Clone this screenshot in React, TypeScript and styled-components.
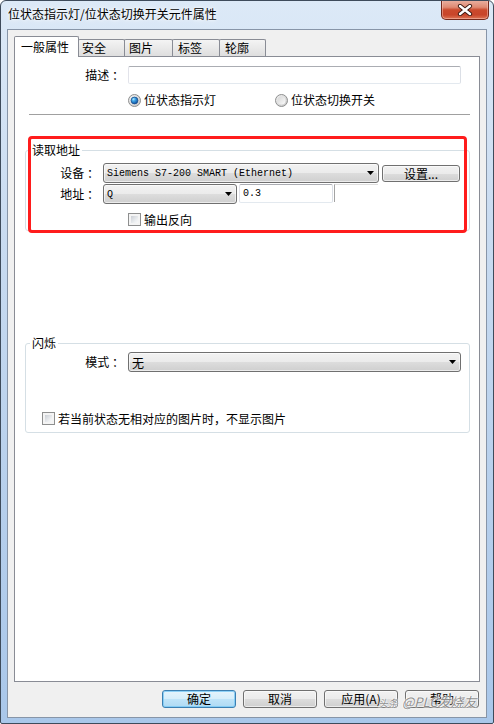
import React from "react";
import styled, { createGlobalStyle } from "styled-components";

const GlobalStyle = createGlobalStyle`
  html, body { margin: 0; padding: 0; background: #ffffff; }
  body {
    font-family: "Noto Sans CJK SC", "Noto Sans", sans-serif;
    font-size: 12px;
    color: #000;
  }
  * { box-sizing: border-box; }
`;

const Window = styled.div`
  position: relative;
  width: 494px;
  height: 724px;
  display: flex;
  flex-direction: column;
  border: 1px solid #3e4b5b;
  border-radius: 6px 6px 2px 2px;
  background: linear-gradient(180deg, #dce9f7 0%, #cadcf1 30%, #b6cfec 70%, #a9c7ea 100%);
  padding: 0 6px 5px 6px;
  overflow: hidden;
`;

const TitleBar = styled.div`
  height: 29px;
  margin: -1px -2px 0 0;
  display: flex;
  justify-content: space-between;
  align-items: flex-start;
  flex-shrink: 0;
`;

const TitleText = styled.div`
  padding: 7px 0 0 1px;
  line-height: 14px;
  font-size: 12px;
  color: #000;
  text-shadow: 0 0 6px #ffffff, 0 0 3px #ffffff;
`;

const CloseButton = styled.div`
  width: 48px;
  height: 20px;
  border: 1px solid #74291c;
  border-top: none;
  border-radius: 0 0 5px 5px;
  background: linear-gradient(180deg, #eab2a3 0%, #df8a73 38%, #cb4a2d 52%, #c8452a 78%, #de7556 100%);
  box-shadow: inset 0 0 0 1px rgba(255, 210, 200, 0.45);
  display: flex;
  align-items: center;
  justify-content: center;
`;

const Client = styled.div`
  flex: 1;
  display: flex;
  flex-direction: column;
  background: #f0f0f0;
  border: 1px solid #8795a8;
  padding-top: 6px;
`;

const TabRow = styled.div`
  position: relative;
  z-index: 2;
  height: 20px;
  margin: 0 6px;
  display: flex;
  align-items: flex-end;
`;

const Tab = styled.div<{ $active?: boolean; $w: number; $pl: number }>`
  width: ${(p) => p.$w}px;
  height: ${(p) => (p.$active ? 21 : 17)}px;
  margin-bottom: ${(p) => (p.$active ? -1 : 0)}px;
  margin-left: -1px;
  &:first-child { margin-left: 0; }
  border: 1px solid #898c95;
  border-bottom: none;
  border-radius: 2px 2px 0 0;
  background: ${(p) => (p.$active ? "#ffffff" : "linear-gradient(180deg, #f4f4f4 0%, #e9e9e9 50%, #dedede 100%)")};
  padding-left: ${(p) => p.$pl}px;
  line-height: ${(p) => (p.$active ? 19 : 15)}px;
  font-size: 12px;
  white-space: nowrap;
`;

const Panel = styled.div`
  position: relative;
  height: 626px;
  margin: 0 6px;
  border: 1px solid #898c95;
  background: #ffffff;
  display: flex;
  flex-direction: column;
  flex-shrink: 0;
`;

const Row = styled.div<{ $mt: number; $h: number; $pl?: number }>`
  margin-top: ${(p) => p.$mt}px;
  height: ${(p) => p.$h}px;
  padding-left: ${(p) => p.$pl ?? 0}px;
  display: flex;
  align-items: center;
  flex-shrink: 0;
`;

const Label = styled.div<{ $w: number }>`
  width: ${(p) => p.$w}px;
  flex-shrink: 0;
  text-align: right;
  padding-right: 4px;
  white-space: pre;
  line-height: 14px;
`;

const TextBox = styled.div<{ $w: number; $h: number }>`
  width: ${(p) => p.$w}px;
  height: ${(p) => p.$h}px;
  border: 1px solid;
  border-color: #abadb3 #dbdfe6 #e3e9ef #e2e3ea;
  border-radius: 2px;
  background: #ffffff;
  padding-left: 3px;
  font-family: "Liberation Mono", "DejaVu Sans Mono", monospace;
  font-size: 10px;
  line-height: ${(p) => p.$h - 2}px;
  flex-shrink: 0;
`;

const Stub = styled.div`
  width: 44px;
  height: 18px;
  margin-left: 1px;
  align-self: flex-start;
  border-top: 1px solid #dedede;
  border-left: 1px solid #a3a3a3;
`;

const Select = styled.div<{ $w: number; $mono?: boolean }>`
  width: ${(p) => p.$w}px;
  height: 20px;
  flex-shrink: 0;
  border: 1px solid #707070;
  border-radius: 3px;
  background: linear-gradient(180deg, #f2f2f2 0%, #ebebeb 50%, #dddddd 50%, #cfcfcf 100%);
  box-shadow: inset 0 0 0 1px rgba(255, 255, 255, 0.6);
  display: flex;
  align-items: center;
  justify-content: space-between;
  padding: 0 4px 0 3px;
  font-family: ${(p) =>
    p.$mono ? '"Liberation Mono", "DejaVu Sans Mono", monospace' : '"Noto Sans CJK SC", sans-serif'};
  font-size: ${(p) => (p.$mono ? 10 : 12)}px;
  white-space: pre;
`;

const PushButton = styled.div<{ $w: number; $h: number; $default?: boolean }>`
  width: ${(p) => p.$w}px;
  height: ${(p) => p.$h}px;
  flex-shrink: 0;
  border: 1px solid ${(p) => (p.$default ? "#3c7fb1" : "#707070")};
  border-radius: 3px;
  background: ${(p) =>
    p.$default
      ? "linear-gradient(180deg, #e5f4fc 0%, #d6eefb 50%, #bfe4f9 50%, #b0daf3 100%)"
      : "linear-gradient(180deg, #f2f2f2 0%, #ebebeb 50%, #dddddd 50%, #cfcfcf 100%)"};
  box-shadow: inset 0 0 0 1px ${(p) => (p.$default ? "rgba(120, 200, 245, 0.8)" : "rgba(255,255,255,0.6)")};
  text-align: center;
  line-height: ${(p) => p.$h - 2}px;
  font-size: 12px;
  white-space: pre;
`;

const Separator = styled.div`
  height: 1px;
  margin: 7px 9px 0 14px;
  background: #a0a0a0;
  flex-shrink: 0;
`;

const GroupBox = styled.div<{ $mt: number; $h: number }>`
  margin: ${(p) => p.$mt}px 9px 0 10px;
  height: ${(p) => p.$h}px;
  border: 1px solid #d5dfe5;
  border-radius: 3px;
  display: flex;
  flex-direction: column;
  flex-shrink: 0;
`;

const Legend = styled.div`
  width: fit-content;
  margin: -8px 0 0 4px;
  padding: 0 2px;
  line-height: 14px;
  background: #ffffff;
`;

const Option = styled.div<{ $w?: number }>`
  ${(p) => (p.$w ? `width: ${p.$w}px;` : "")}
  display: flex;
  align-items: center;
  gap: 3px;
  line-height: 14px;
  white-space: nowrap;
`;

const CheckBox = styled.span`
  width: 13px;
  height: 13px;
  flex-shrink: 0;
  border: 1px solid #8e8f8f;
  padding: 2px;
  background: linear-gradient(135deg, #cbcfd5 0%, #eef0f2 70%, #f8f8f8 100%) content-box, #f4f4f4;
`;

const ButtonRow = styled.div`
  display: flex;
  justify-content: flex-end;
  gap: 7px;
  padding: 8px 7px 0 0;
`;

const Annotation = styled.div`
  position: absolute;
  left: 13px;
  top: 79px;
  width: 439px;
  height: 97px;
  border: 3px solid #ff1c1c;
  border-radius: 4px;
  pointer-events: none;
`;

const Watermark = styled.div`
  position: absolute;
  left: 377px;
  top: 691px;
  display: flex;
  align-items: baseline;
  gap: 4px;
  color: rgba(120, 120, 120, 0.85);
  font-style: italic;
  text-shadow: 0 0 2px #ffffff, 0 0 2px #ffffff, 0 0 1px #ffffff;
  pointer-events: none;
`;

const WmSmall = styled.span`
  font-size: 10px;
`;

const WmBig = styled.span`
  font-size: 13px;
  font-family: "Noto Sans CJK SC", "Noto Sans", sans-serif;
`;

const Arrow = () => (
  <svg width="7" height="4" viewBox="0 0 7 4">
    <path d="M0 0H7L3.5 4Z" fill="#000" />
  </svg>
);

const CloseGlyph = () => (
  <svg width="16" height="12" viewBox="0 0 16 12">
    <path d="M3 2L13 10M13 2L3 10" stroke="#3d1a12" strokeWidth="4.2" strokeLinecap="round" />
    <path d="M3 2L13 10M13 2L3 10" stroke="#ffffff" strokeWidth="2.4" strokeLinecap="round" />
  </svg>
);

const Radio = ({ checked }: { checked?: boolean }) => (
  <svg width="13" height="13" viewBox="0 0 13 13">
    <defs>
      <linearGradient id="rOuter" x1="0" y1="0" x2="1" y2="1">
        <stop offset="0" stopColor="#f4f4f4" />
        <stop offset="1" stopColor="#c4c4c4" />
      </linearGradient>
      <linearGradient id="rInner" x1="0" y1="0" x2="1" y2="1">
        <stop offset="0" stopColor="#d6d6d6" />
        <stop offset="1" stopColor="#fbfbfb" />
      </linearGradient>
      <radialGradient id="rDot" cx="0.35" cy="0.3" r="0.75">
        <stop offset="0" stopColor="#b8ecff" />
        <stop offset="0.35" stopColor="#3fa6e8" />
        <stop offset="1" stopColor="#0a4a9a" />
      </radialGradient>
    </defs>
    <circle cx="6.5" cy="6.5" r="6" fill="url(#rOuter)" stroke="#8e8f8f" strokeWidth="1" />
    {checked ? (
      <circle cx="6.5" cy="6.5" r="3.4" fill="url(#rDot)" stroke="#1b4f8e" strokeWidth="0.8" />
    ) : (
      <circle cx="6.5" cy="6.5" r="4" fill="url(#rInner)" />
    )}
  </svg>
);

const tabs = [
  { label: "一般属性", w: 65, pl: 6, active: true },
  { label: "安全", w: 47, pl: 3 },
  { label: "图片", w: 49, pl: 4 },
  { label: "标签", w: 48, pl: 5 },
  { label: "轮廓", w: 47, pl: 5 },
];

const footerButtons = [
  { label: "确定", def: true },
  { label: "取消" },
  { label: "应用(A)" },
  { label: "帮助" },
];

export default function App() {
  return (
    <>
      <GlobalStyle />
      <Window>
        <TitleBar>
          <TitleText>位状态指示灯/位状态切换开关元件属性</TitleText>
          <CloseButton>
            <CloseGlyph />
          </CloseButton>
        </TitleBar>
        <Client>
          <TabRow>
            {tabs.map((t) => (
              <Tab key={t.label} $active={t.active} $w={t.w} $pl={t.pl}>
                {t.label}
              </Tab>
            ))}
          </TabRow>
          <Panel>
            <Row $mt={9} $h={18}>
              <Label $w={113}>描述 ：</Label>
              <TextBox $w={333} $h={18} />
            </Row>
            <Row $mt={9} $h={14} $pl={113}>
              <Option $w={147}>
                <Radio checked />
                位状态指示灯
              </Option>
              <Option>
                <Radio />
                位状态切换开关
              </Option>
            </Row>
            <Separator />
            <GroupBox $mt={35} $h={81}>
              <Legend>读取地址</Legend>
              <Row $mt={6} $h={20}>
                <Label $w={77}>设备 ：</Label>
                <Select $w={276} $mono>
                  <span>Siemens S7-200 SMART (Ethernet)</span>
                  <Arrow />
                </Select>
                <PushButton $w={78} $h={17} style={{ marginLeft: 3 }}>
                  设置...
                </PushButton>
              </Row>
              <Row $mt={1} $h={20}>
                <Label $w={77}>地址 ：</Label>
                <Select $w={134} $mono>
                  <span>Q</span>
                  <Arrow />
                </Select>
                <TextBox $w={94} $h={19} style={{ marginLeft: 2, alignSelf: "flex-start" }}>
                  0.3
                </TextBox>
                <Stub />
              </Row>
              <Row $mt={9} $h={13} $pl={102}>
                <Option>
                  <CheckBox />
                  输出反向
                </Option>
              </Row>
            </GroupBox>
            <GroupBox $mt={112} $h={90}>
              <Legend>闪烁</Legend>
              <Row $mt={2} $h={20}>
                <Label $w={102}>模式 ：</Label>
                <Select $w={333}>
                  <span>无</span>
                  <Arrow />
                </Select>
              </Row>
              <Row $mt={40} $h={13} $pl={16}>
                <Option>
                  <CheckBox />
                  若当前状态无相对应的图片时，不显示图片
                </Option>
              </Row>
            </GroupBox>
            <Annotation />
          </Panel>
          <ButtonRow>
            {footerButtons.map((b) => (
              <PushButton key={b.label} $w={74} $h={18} $default={b.def}>
                {b.label}
              </PushButton>
            ))}
          </ButtonRow>
        </Client>
        <Watermark>
          <WmSmall>头条</WmSmall>
          <WmBig>@PLC发烧友</WmBig>
        </Watermark>
      </Window>
    </>
  );
}
